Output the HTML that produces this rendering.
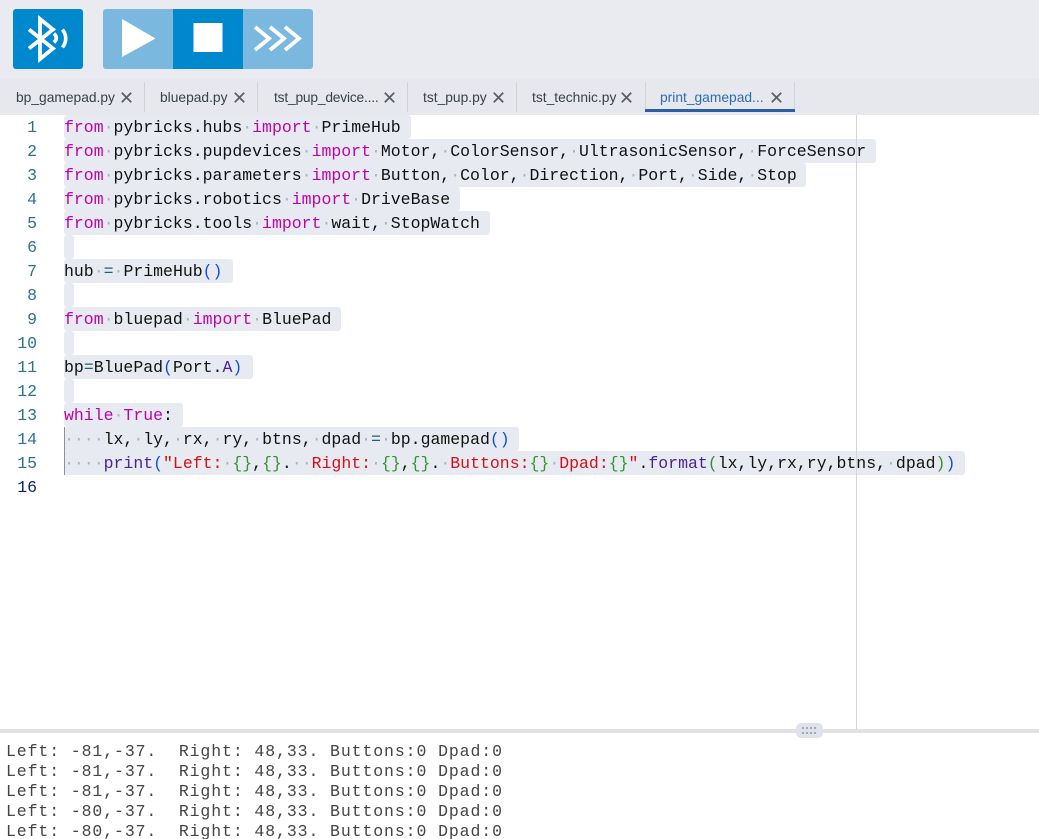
<!DOCTYPE html>
<html lang="en">
<head>
<meta charset="utf-8">
<title>Pybricks editor</title>
<style>
html,body{margin:0;padding:0;width:1039px;height:839px;overflow:hidden;background:#fff}
body{position:relative;font-family:"Liberation Sans",sans-serif}
#top{position:absolute;left:0;top:0;width:1039px;height:79px;background:#e9ebf1}
.btn{position:absolute;top:9px;height:60px}
#tabs{position:absolute;left:0;top:79px;width:1039px;height:36px;background:#e6e8ee}
.tab{position:absolute;top:10px;font-size:13.8px;line-height:18px;color:#3a4048;white-space:nowrap}
.sep{position:absolute;top:3px;width:1px;height:30px;background:#cfd2d8}
.x{position:absolute;top:13px;width:11px;height:11px}
#under{position:absolute;left:645px;top:30px;width:150px;height:3px;background:#2a5fa5}
.sel{position:absolute;left:64px;height:24px;background:#e7ebf1;border-radius:3px}
.ln{position:absolute;left:0;width:37px;text-align:right;font:16.5px/24px "Liberation Mono",monospace;color:#2b7490;transform:translateY(1px)}
.c{position:absolute;left:64px;font:16.5px/24px "Liberation Mono",monospace;color:#111;white-space:pre;transform:translateY(1px)}
.k{color:#bb04a8}.d{color:#a9b3c1}.b{color:#0f4fe0}.g{color:#319331}.s{color:#d3101a}.f{color:#4a2396}.o{color:#1f5f70}
#ruler{position:absolute;left:856px;top:115px;width:1px;height:614px;background:#d4d4d4}
#guide{position:absolute;left:64px;top:427px;width:1px;height:48px;background:#8f8f8f}
#sash{position:absolute;left:0;top:729px;width:1039px;height:4px;background:#e1e1e3}
#handle{position:absolute;left:796px;top:723px;width:27px;height:15px;border-radius:5px;background:#dfe2ea}
#term{position:absolute;left:6px;top:742px;font:16.5px/20px "Liberation Mono",monospace;letter-spacing:.9px;color:#444;white-space:pre}
</style>
</head>
<body>
<div id="top"></div>

<svg class="btn" style="left:13px;width:70px" viewBox="0 0 70 60">
<rect width="70" height="60" rx="3" fill="#0088ce"/>
<path d="M16 20.500L40 39.500L27 50V10L40 20.500L16 39.500" fill="none" stroke="#fff" stroke-width="3.800"/>
<path d="M41 24.500Q45.500 29 41 33.500" fill="none" stroke="#fff" stroke-width="3.600"/>
<path d="M49.500 20.500Q56 29.500 49.500 38.500" fill="none" stroke="#fff" stroke-width="3.600"/>
</svg>

<svg class="btn" style="left:103px;width:210px" viewBox="0 0 210 60">
<rect width="210" height="60" rx="3" fill="#7ab8e0"/>
<rect x="70" width="70" height="60" fill="#0088ce"/>
<path d="M19 10L52.500 29.500L19 48Z" fill="#fff"/>
<rect x="90.500" y="14" width="29" height="29" fill="#fff"/>
<path d="M152 18L166 29.500L152 41M167 18L181 29.500L167 41M182 18L196 29.500L182 41" fill="none" stroke="#fff" stroke-width="3.800"/>
</svg>

<div id="tabs">
<div class="tab" style="left:16px">bp_gamepad.py</div>
<svg class="x" style="left:121px" viewBox="0 0 11 11"><path d="M.8.8L10.200 10.200M10.200.8L.8 10.200" stroke="#5a6068" stroke-width="1.800"/></svg>
<div class="sep" style="left:144px"></div>
<div class="tab" style="left:160px">bluepad.py</div>
<svg class="x" style="left:234px" viewBox="0 0 11 11"><path d="M.8.8L10.200 10.200M10.200.8L.8 10.200" stroke="#5a6068" stroke-width="1.800"/></svg>
<div class="sep" style="left:257px"></div>
<div class="tab" style="left:274px;letter-spacing:-.2px">tst_pup_device....</div>
<svg class="x" style="left:384px" viewBox="0 0 11 11"><path d="M.8.8L10.200 10.200M10.200.8L.8 10.200" stroke="#5a6068" stroke-width="1.800"/></svg>
<div class="sep" style="left:407px"></div>
<div class="tab" style="left:423px">tst_pup.py</div>
<svg class="x" style="left:493px" viewBox="0 0 11 11"><path d="M.8.8L10.200 10.200M10.200.8L.8 10.200" stroke="#5a6068" stroke-width="1.800"/></svg>
<div class="sep" style="left:516px"></div>
<div class="tab" style="left:532px">tst_technic.py</div>
<svg class="x" style="left:621px" viewBox="0 0 11 11"><path d="M.8.8L10.200 10.200M10.200.8L.8 10.200" stroke="#5a6068" stroke-width="1.800"/></svg>
<div class="sep" style="left:645px"></div>
<div class="tab" style="left:660px;color:#2a6cb0">print_gamepad...</div>
<svg class="x" style="left:771px" viewBox="0 0 11 11"><path d="M.8.8L10.200 10.200M10.200.8L.8 10.200" stroke="#5a6068" stroke-width="1.800"/></svg>
<div class="sep" style="left:794px"></div>
<div id="under"></div>
</div>

<div class="sel" style="top:115px;width:347px"></div>
<div class="sel" style="top:139px;width:812px"></div>
<div class="sel" style="top:163px;width:742px"></div>
<div class="sel" style="top:187px;width:396px"></div>
<div class="sel" style="top:211px;width:426px"></div>
<div class="sel" style="top:235px;width:10px"></div>
<div class="sel" style="top:259px;width:169px"></div>
<div class="sel" style="top:283px;width:10px"></div>
<div class="sel" style="top:307px;width:277px"></div>
<div class="sel" style="top:331px;width:10px"></div>
<div class="sel" style="top:355px;width:189px"></div>
<div class="sel" style="top:379px;width:10px"></div>
<div class="sel" style="top:403px;width:119px"></div>
<div class="sel" style="top:427px;width:455px"></div>
<div class="sel" style="top:451px;width:901px"></div>

<div id="ruler"></div>
<div id="guide"></div>

<div class="ln" style="top:115px">1</div>
<div class="ln" style="top:139px">2</div>
<div class="ln" style="top:163px">3</div>
<div class="ln" style="top:187px">4</div>
<div class="ln" style="top:211px">5</div>
<div class="ln" style="top:235px">6</div>
<div class="ln" style="top:259px">7</div>
<div class="ln" style="top:283px">8</div>
<div class="ln" style="top:307px">9</div>
<div class="ln" style="top:331px">10</div>
<div class="ln" style="top:355px">11</div>
<div class="ln" style="top:379px">12</div>
<div class="ln" style="top:403px">13</div>
<div class="ln" style="top:427px">14</div>
<div class="ln" style="top:451px">15</div>
<div class="ln" style="top:475px;color:#0b216f">16</div>

<div class="c" style="top:115px"><span class="k">from</span><span class="d">·</span>pybricks.hubs<span class="d">·</span><span class="k">import</span><span class="d">·</span>PrimeHub</div>
<div class="c" style="top:139px"><span class="k">from</span><span class="d">·</span>pybricks.pupdevices<span class="d">·</span><span class="k">import</span><span class="d">·</span>Motor,<span class="d">·</span>ColorSensor,<span class="d">·</span>UltrasonicSensor,<span class="d">·</span>ForceSensor</div>
<div class="c" style="top:163px"><span class="k">from</span><span class="d">·</span>pybricks.parameters<span class="d">·</span><span class="k">import</span><span class="d">·</span>Button,<span class="d">·</span>Color,<span class="d">·</span>Direction,<span class="d">·</span>Port,<span class="d">·</span>Side,<span class="d">·</span>Stop</div>
<div class="c" style="top:187px"><span class="k">from</span><span class="d">·</span>pybricks.robotics<span class="d">·</span><span class="k">import</span><span class="d">·</span>DriveBase</div>
<div class="c" style="top:211px"><span class="k">from</span><span class="d">·</span>pybricks.tools<span class="d">·</span><span class="k">import</span><span class="d">·</span>wait,<span class="d">·</span>StopWatch</div>
<div class="c" style="top:259px">hub<span class="d">·</span><span class="o">=</span><span class="d">·</span>PrimeHub<span class="b">()</span></div>
<div class="c" style="top:307px"><span class="k">from</span><span class="d">·</span>bluepad<span class="d">·</span><span class="k">import</span><span class="d">·</span>BluePad</div>
<div class="c" style="top:355px">bp<span class="o">=</span>BluePad<span class="b">(</span>Port.<span class="f">A</span><span class="b">)</span></div>
<div class="c" style="top:403px"><span class="k">while</span><span class="d">·</span><span class="k">True</span>:</div>
<div class="c" style="top:427px"><span class="d">····</span>lx,<span class="d">·</span>ly,<span class="d">·</span>rx,<span class="d">·</span>ry,<span class="d">·</span>btns,<span class="d">·</span>dpad<span class="d">·</span><span class="o">=</span><span class="d">·</span>bp.gamepad<span class="b">()</span></div>
<div class="c" style="top:451px"><span class="d">····</span><span class="f">print</span><span class="b">(</span><span class="s">"Left:</span><span class="d">·</span><span class="g">{}</span>,<span class="g">{}</span>.<span class="d">··</span><span class="s">Right:</span><span class="d">·</span><span class="g">{}</span>,<span class="g">{}</span>.<span class="d">·</span><span class="s">Buttons:</span><span class="g">{}</span><span class="d">·</span><span class="s">Dpad:</span><span class="g">{}</span><span class="s">"</span>.<span class="f">format</span><span class="g">(</span>lx,ly,rx,ry,btns,<span class="d">·</span>dpad<span class="g">)</span><span class="b">)</span></div>

<div id="sash"></div>
<div id="handle">
<svg width="27" height="15" viewBox="0 0 27 15" style="display:block">
<g fill="#a4a8b0">
<rect x="6" y="4" width="2" height="2"/><rect x="10" y="4" width="2" height="2"/><rect x="14" y="4" width="2" height="2"/><rect x="18" y="4" width="2" height="2"/>
<rect x="6" y="9" width="2" height="2"/><rect x="10" y="9" width="2" height="2"/><rect x="14" y="9" width="2" height="2"/><rect x="18" y="9" width="2" height="2"/>
</g>
</svg>
</div>

<div id="term">Left: -81,-37.  Right: 48,33. Buttons:0 Dpad:0
Left: -81,-37.  Right: 48,33. Buttons:0 Dpad:0
Left: -81,-37.  Right: 48,33. Buttons:0 Dpad:0
Left: -80,-37.  Right: 48,33. Buttons:0 Dpad:0
Left: -80,-37.  Right: 48,33. Buttons:0 Dpad:0</div>
</body>
</html>
